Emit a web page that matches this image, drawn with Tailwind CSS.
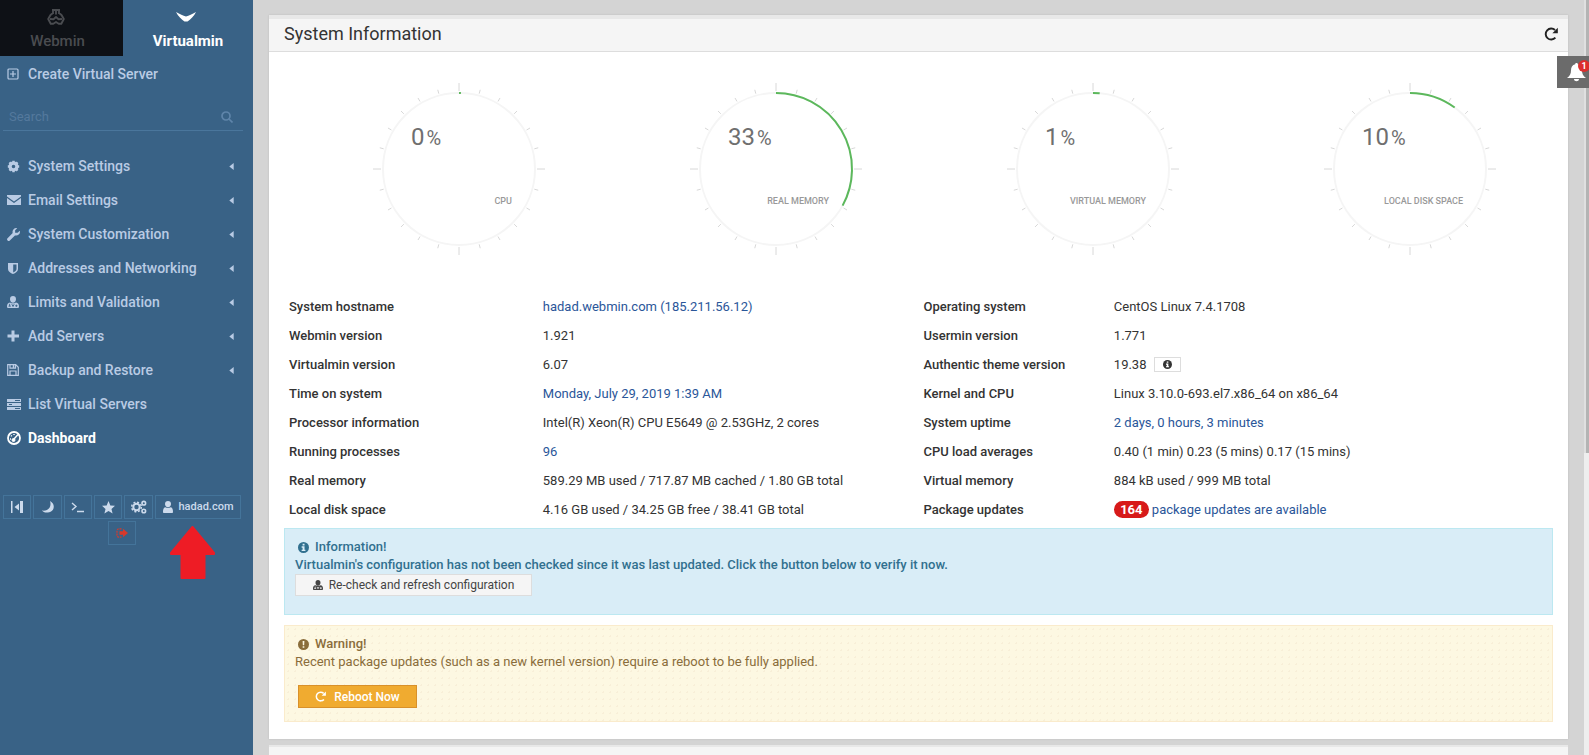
<!DOCTYPE html>
<html lang="en">
<head>
<meta charset="utf-8">
<title>Virtualmin - System Information</title>
<script src="https://cdn.jsdelivr.net/npm/@tailwindcss/browser@4"></script>
</head>
<body class="flex h-screen overflow-hidden bg-[#d4d4d4] font-[Roboto,sans-serif] text-[13px] leading-[18px] text-[#333]">

<!-- shared icon shapes -->
<svg class="hidden" aria-hidden="true">
  <symbol id="info" viewBox="0 0 16 16"><circle cx="8" cy="8" r="8" fill="currentColor"/><path fill="var(--dot)" d="M6.700 2.600h2.800v2.400H6.700zM5.300 6.300h4.200v4.800h1.300v2H5.300v-2h1.400V8.300H5.300z"/></symbol>
  <symbol id="userlock" viewBox="0 0 16 16"><path fill="currentColor" d="M8 0c2.600 0 4 1.700 4 4.200S10.300 9 8 9 4 6.700 4 4.200 5.400 0 8 0zM4 8.500c2.500 1.700 5.500 1.700 8 0 2.800.4 4 2.500 4 5 0 1.500-.5 2.500-1.500 2.500h-13C.5 16 0 15 0 13.500c0-2.500 1.200-4.600 4-5z"/><path d="M2 13.500h3M3.500 10.500v3M11 13h3m-1.500-1.500v3M6.500 11 8 14l1.500-3" stroke="var(--dot)" stroke-width="1.200" fill="none"/></symbol>
  <symbol id="reload" viewBox="0 0 16 16"><path d="M13 12.200A6.300 6.300 0 1 1 12.600 3.500" fill="none" stroke="currentColor" stroke-width="2.200"/><path fill="currentColor" d="M15.800.8v6.200H9.600z"/></symbol>
  <symbol id="caret" viewBox="0 0 5 8"><path fill="currentColor" d="M5 0v8L0 4z"/></symbol>
</svg>

<aside class="relative flex w-[253px] shrink-0 flex-col bg-[#396286] text-[14px] font-medium text-[#b9cbe4] [--dot:#396286]">
  <div class="flex h-14 shrink-0 text-center text-[15px]">
    <button class="flex w-[123px] flex-col items-center bg-[#0e1116] pt-2 pr-2 text-[#4a4c50]">
      <svg class="mr-1 h-[18px] w-[18px]" viewBox="0 0 18 18" fill="none" stroke="currentColor" stroke-width="1.900" stroke-linejoin="round"><path d="M5 2h8M6 2v4M9 2v4.500M12 2v4M6 5 3.500 7 1.200 11l2.500 4.800h2.600L9 14l2.700 1.800h2.600l2.500-4.800L14.500 7 12 5M3 11l3.500.3L9 9l2.500 2.300L15 11"/></svg>
      <span class="mt-1.5">Webmin</span>
    </button>
    <button class="flex flex-1 flex-col items-center pt-2 font-bold text-white">
      <svg class="mr-1 h-5 w-5" viewBox="0 0 20 20" fill="currentColor"><path d="M0 4c4 2.500 7 3.500 10 4.500C13 7.500 16 6.500 20 4c-2 4-5.500 7.500-8.500 9.500h-3C5.500 11.500 2 8 0 4z"/></svg>
      <span class="mt-1">Virtualmin</span>
    </button>
  </div>
  <a href="#" class="mt-1 flex h-7 items-center gap-2 pl-[7px]">
    <svg class="h-3 w-3" viewBox="0 0 12 12" fill="none" stroke="currentColor" stroke-width="1.200"><rect x="1" y="1" width="10" height="10" rx="1"/><path d="M6 3v6M3 6h6"/></svg>
    <span class="pl-[1px]">Create Virtual Server</span>
  </a>
  <label class="mt-4 ml-[3px] mr-2.5 flex h-[27px] items-center border-b border-[#4a769c] pl-1.5 pr-2.5 text-[#5f85aa]">
    <input type="text" placeholder="Search" aria-label="Search" class="w-full min-w-0 flex-1 bg-transparent text-[13px] font-normal outline-none placeholder:text-[#54799d]">
    <svg class="h-3 w-3" viewBox="0 0 12 12" fill="none" stroke="currentColor" stroke-width="1.700"><circle cx="5" cy="5" r="4"/><path d="m8 8 3.500 3.500"/></svg>
  </label>
  <nav class="mt-[18px] flex flex-col">
    <a href="#" class="flex h-[34px] items-center pl-[7px] pr-[19px]"><svg class="mr-2 h-[13px] w-[13px]" viewBox="0 0 16 16" fill="none" stroke="currentColor"><circle cx="8" cy="8" r="4.200" stroke-width="4"/><path stroke-width="3" d="M8 1v3M8 12v3M1 8h3M12 8h3M3 3l2 2M11 11l2 2M13 3l-2 2M5 11l-2 2"/></svg><span class="flex-1">System Settings</span><svg class="h-[7px] w-[5px]"><use href="#caret"/></svg></a>
    <a href="#" class="flex h-[34px] items-center pl-[7px] pr-[19px]"><svg class="mr-[7px] h-3 w-3.5" viewBox="0 0 14 12" fill="currentColor"><path d="M0 1h14v1.500L7 7.500 0 2.500zM0 4l7 5 7-5v7H0z"/></svg><span class="flex-1">Email Settings</span><svg class="h-[7px] w-[5px]"><use href="#caret"/></svg></a>
    <a href="#" class="flex h-[34px] items-center pl-[7px] pr-[19px]"><svg class="mr-2 h-[13px] w-[13px]" viewBox="0 0 16 16" fill="currentColor"><path d="M15.800 3.500a4.700 4.700 0 0 1-6 5.600L3.500 15.300a1.900 1.900 0 0 1-2.800-2.800L7 6.200A4.700 4.700 0 0 1 12.600.3L10 2.900v2.900h3z"/></svg><span class="flex-1">System Customization</span><svg class="h-[7px] w-[5px]"><use href="#caret"/></svg></a>
    <a href="#" class="flex h-[34px] items-center pl-2 pr-[19px]"><svg class="mr-2.5 h-[11px] w-2.5" viewBox="0 0 10 11" fill="currentColor"><path fill-rule="evenodd" d="M0 0h10v6c0 2.500-2.500 4-5 5-2.500-1-5-2.500-5-5zm5.200 1.500v8C7 8.500 8.500 7.500 8.500 6V1.500z"/></svg><span class="flex-1">Addresses and Networking</span><svg class="h-[7px] w-[5px]"><use href="#caret"/></svg></a>
    <a href="#" class="flex h-[34px] items-center pl-[7px] pr-[19px]"><svg class="mr-[9px] h-3 w-3"><use href="#userlock"/></svg><span class="flex-1">Limits and Validation</span><svg class="h-[7px] w-[5px]"><use href="#caret"/></svg></a>
    <a href="#" class="flex h-[34px] items-center pl-[7px] pr-[19px]"><svg class="mr-[9px] h-3 w-3" viewBox="0 0 12 12" fill="currentColor"><path d="M4.500.5h3v4H12v3H7.500v4h-3v-4H.5v-3h4z"/></svg><span class="flex-1">Add Servers</span><svg class="h-[7px] w-[5px]"><use href="#caret"/></svg></a>
    <a href="#" class="flex h-[34px] items-center pl-[7px] pr-[19px]"><svg class="mr-[9px] h-3 w-3" viewBox="0 0 12 12" fill="none" stroke="currentColor" stroke-width="1.200"><path d="M.7.7h8l2.600 2.600v8H.7zM3 .7v3.500h5.500V.7M3 11V7h6v4"/><path d="M6.500 1v3" stroke-width="1.500"/></svg><span class="flex-1">Backup and Restore</span><svg class="h-[7px] w-[5px]"><use href="#caret"/></svg></a>
    <a href="#" class="flex h-[34px] items-center pl-[7px]"><svg class="mr-[7px] h-3 w-3.5" viewBox="0 0 14 12" fill="currentColor"><path d="M0 1h14v3H0zM0 5h14v3H0zM0 9h14v3H0z"/><path stroke="var(--dot)" d="M8 2.500h5M2 6.500h3M8 10.500h5"/></svg><span>List Virtual Servers</span></a>
    <a href="#" class="flex h-[34px] items-center pl-[7px] font-bold text-white"><svg class="mr-[7px] h-3.5 w-3.5" viewBox="0 0 14 14" fill="none" stroke="currentColor"><circle cx="7" cy="7" r="6" stroke-width="1.800"/><path d="M7 8l4-4.500M3 8h1M4 4.500l.8.8M7 3v1" stroke-width="1.400"/><circle cx="6.500" cy="9" r="1.500" fill="currentColor"/></svg><span>Dashboard</span></a>
  </nav>
  <div class="mt-10 ml-[3px] mr-3 flex flex-wrap justify-center gap-0.5 text-[11px] font-normal text-[#ccdaec]">
    <button aria-label="Collapse" class="flex h-6 w-7 items-center justify-center border border-[#44749a]"><svg class="h-3 w-3" viewBox="0 0 12 12" fill="currentColor"><path d="M0 0h1.500v12H0zM9 0h3v12H9zM8 2.500v7L3.500 6z"/></svg></button>
    <button aria-label="Night mode" class="flex h-6 w-[29px] items-center justify-center border border-[#44749a]"><svg class="h-3 w-3" viewBox="0 0 12 12" fill="currentColor"><path d="M8 0c6 3 4.500 11-2 11.500C3 11.800 1 11 0 9.500 6 10.500 10 6 8 0z"/></svg></button>
    <button aria-label="Terminal" class="flex h-6 w-7 items-center justify-center border border-[#44749a]"><svg class="h-3 w-3.5" viewBox="0 0 14 12" fill="none" stroke="currentColor" stroke-width="1.400"><path d="m1 2 4 3.500L1 9M6 10.500h7"/></svg></button>
    <button aria-label="Favorites" class="flex h-6 w-7 items-center justify-center border border-[#44749a]"><svg class="h-[13px] w-[13px]" viewBox="0 0 14 14" fill="currentColor"><path d="m7 0 2 4.800 5 .4-3.800 3.300 1.200 5L7 10.800l-4.400 2.700 1.200-5L0 5.200l5-.4z"/></svg></button>
    <button aria-label="Settings" class="flex h-6 w-[29px] items-center justify-center border border-[#44749a]"><svg class="h-3.5 w-4" viewBox="0 0 16 14" fill="none" stroke="currentColor"><circle cx="5.500" cy="7" r="3.200" stroke-width="2"/><circle cx="5.500" cy="7" r="4.800" stroke-width="1.500" stroke-dasharray="2 1.770"/><circle cx="12.800" cy="3.200" r="1.800" stroke-width="1.600"/><circle cx="12.800" cy="11" r="1.800" stroke-width="1.600"/></svg></button>
    <button class="flex h-6 w-[86px] items-center justify-center gap-1.5 border border-[#44749a] font-medium"><svg class="h-3 w-2.5" viewBox="0 0 10 12" fill="currentColor"><path d="M5 0c2 0 3 1.300 3 3S6.800 6.300 5 6.300 2 4.700 2 3s1-3 3-3zM2.300 6.300c1.700 1 3.700 1 5.400 0C9.500 6.800 10 8.500 10 11c0 .7-.5 1-1 1H1c-.5 0-1-.3-1-1 0-2.500.5-4.200 2.300-4.700z"/></svg>hadad.com</button>
    <button aria-label="Log out" class="flex h-6 w-7 items-center justify-center border border-[#44749a] text-[#d8392b]"><svg class="h-2.5 w-3" viewBox="0 0 12 10"><path d="M5.500.8H3Q1 .8 1 3v4q0 2.200 2 2.200h2.500" fill="none" stroke="currentColor" stroke-width="1.200" stroke-dasharray="2 .8"/><path fill="currentColor" d="M3.500 3.300H7V.8L12 5 7 9.200V6.700H3.500z"/></svg></button>
  </div>
  <svg class="absolute top-[526px] left-[170px] h-[53px] w-[45px]" viewBox="0 0 45 53" aria-hidden="true"><path fill="#ee1c25" stroke="#ee1c25" stroke-width="2" stroke-linejoin="round" d="M22.500 1 44 27v1H34.500v24h-23V28H1v-1z"/></svg>
</aside>

<main class="flex min-w-0 flex-1 flex-col overflow-hidden pt-[15px] pl-4 pr-4">
  <section class="shrink-0 bg-white shadow-[0_0_2px_#bbb]">
    <header class="flex h-[37px] items-center justify-between border-t-4 border-b border-t-[#e8e8e8] border-b-[#ddd] bg-[#f5f5f5] pl-[15px] pr-2.5 pb-0.5">
      <h1 class="text-[18px] font-normal">System Information</h1>
      <button aria-label="Refresh" class="text-[#222]"><svg class="h-3.5 w-3.5"><use href="#reload"/></svg></button>
    </header>
    <div class="px-[15px] pt-[31px] pb-[17px]">
      <div id="gauges" class="grid grid-cols-4"></div>

      <table class="mt-[37px] w-full table-fixed text-left">
        <colgroup><col class="w-[20%]"><col class="w-[30%]"><col class="w-[15%]"><col class="w-[35%]"></colgroup>
        <tbody class="[&_td]:pl-[5px] [&_th]:pl-[5px] [&_th]:font-medium [&_tr]:h-[29px] [&_a]:text-[#2a5699]">
          <tr><th>System hostname</th><td><a href="#">hadad.webmin.com (185.211.56.12)</a></td><th>Operating system</th><td>CentOS Linux 7.4.1708</td></tr>
          <tr><th>Webmin version</th><td>1.921</td><th>Usermin version</th><td>1.771</td></tr>
          <tr><th>Virtualmin version</th><td>6.07</td><th>Authentic theme version</th><td><div class="flex items-center gap-2">19.38 <button aria-label="Theme information" class="flex h-[15px] w-[27px] items-center justify-center border border-[#ddd] [--dot:#fff]"><svg class="h-[9px] w-[9px]"><use href="#info"/></svg></button></div></td></tr>
          <tr><th>Time on system</th><td><a href="#">Monday, July 29, 2019 1:39 AM</a></td><th>Kernel and CPU</th><td>Linux 3.10.0-693.el7.x86_64 on x86_64</td></tr>
          <tr><th>Processor information</th><td>Intel(R) Xeon(R) CPU E5649 @ 2.53GHz, 2 cores</td><th>System uptime</th><td><a href="#">2 days, 0 hours, 3 minutes</a></td></tr>
          <tr><th>Running processes</th><td><a href="#">96</a></td><th>CPU load averages</th><td>0.40 (1 min) 0.23 (5 mins) 0.17 (15 mins)</td></tr>
          <tr><th>Real memory</th><td>589.29 MB used / 717.87 MB cached / 1.80 GB total</td><th>Virtual memory</th><td>884 kB used / 999 MB total</td></tr>
          <tr><th>Local disk space</th><td>4.16 GB used / 34.25 GB free / 38.41 GB total</td><th>Package updates</th><td><a href="#" class="flex items-center gap-[3px]"><span class="flex h-[17px] w-[35px] items-center justify-center rounded-full bg-[#d71a1a] font-bold text-white">164</span>package updates are available</a></td></tr>
        </tbody>
      </table>

      <div class="mt-1 h-[87px] border border-[#bce8f1] bg-[#d9edf7] px-2.5 pt-[9px] text-[#31708f] [--dot:#d9edf7]">
        <div class="flex items-center gap-1.5 pl-[3px] font-medium"><svg class="h-[11px] w-[11px]"><use href="#info"/></svg>Information!</div>
        <p class="font-medium">Virtualmin's configuration has not been checked since it was last updated. Click the button below to verify it now.</p>
        <button class="flex h-[22px] w-[237px] items-center justify-center gap-1.5 border border-[#ddd] bg-[#f5f5f5] text-[12px] text-[#444] [--dot:#f5f5f5]"><svg class="h-2.5 w-2.5"><use href="#userlock"/></svg>Re-check and refresh configuration</button>
      </div>
      <div class="mt-2.5 h-[97px] border border-[#faebcc] bg-[#fdf8e2] bg-[radial-gradient(#f8efd8_1px,transparent_1px)] bg-size-[7px_7px] px-2.5 pt-[9px] text-[#8a6d3b]">
        <div class="flex items-center gap-1.5 pl-[3px] font-medium"><svg class="h-[11px] w-[11px]" viewBox="0 0 16 16"><circle cx="8" cy="8" r="8" fill="currentColor"/><path fill="#fdf8e2" d="M6.700 3h2.600L9 9H7zM6.800 10.500h2.400v2.400H6.800z"/></svg>Warning!</div>
        <p>Recent package updates (such as a new kernel version) require a reboot to be fully applied.</p>
        <button class="mt-3.5 ml-[3px] flex h-[23px] w-[119px] items-center justify-center gap-2 border border-[#d9912a] bg-[#f0ab30] text-[12px] font-medium text-white"><svg class="h-[11px] w-[11px]"><use href="#reload"/></svg>Reboot Now</button>
      </div>
    </div>
  </section>
  <section class="mt-1.5 h-[37px] shrink-0 border-t-2 border-[#e8e8e8] bg-[#f5f5f5]"></section>
</main>

<div class="w-[5px] shrink-0 bg-[#eee]" aria-hidden="true"><div class="h-[60%] border-l-2 border-[#e0e0e0] bg-[#b4b4b4]"></div></div>

<button aria-label="Notifications" class="fixed top-14 right-0 h-8 w-8 overflow-hidden bg-[#6b6b6b] text-white">
  <svg class="ml-2.5 h-5 w-[19px]" viewBox="0 0 19 20" fill="currentColor"><path d="M9.500 1c.8 0 1.300.5 1.300 1.300 3 .8 4.200 3 4.200 6.200 0 3.500 1.200 5.500 4 7.500H0c2.800-2 4-4 4-7.500 0-3.200 1.200-5.400 4.200-6.200C8.200 1.500 8.700 1 9.500 1zM7 17h5c0 3-5 3-5 0z"/></svg>
  <span class="absolute top-1 left-[21px] flex h-3 w-3 items-center justify-center rounded-full bg-[#dc2f2f] text-[9px] leading-none font-bold">1</span>
</button>

<script>
  const gauges = [[0.4, '0', 'CPU'], [33, '33', 'REAL MEMORY'], [1.4, '1', 'VIRTUAL MEMORY'], [10, '10', 'LOCAL DISK SPACE']];
  const point = (r, deg) => {
    const a = deg * Math.PI / 180;
    return (86 + r * Math.sin(a)).toFixed(2) + ' ' + (86 - r * Math.cos(a)).toFixed(2);
  };
  let ticks = '';
  for (let i = 0; i < 24; i++) ticks += `M${point(78, i * 15)}L${point(i % 6 ? 82 : 86, i * 15)}`;
  document.getElementById('gauges').innerHTML = gauges.map(([v, n, label]) => `
    <div class="flex justify-center pl-8">
      <svg class="h-[172px] w-[172px]" viewBox="0 0 172 172" role="img" aria-label="${label} ${n}%">
        <circle cx="86" cy="86" r="76" fill="none" stroke="#f5f5f5" stroke-width="2"/>
        <path d="${ticks}" stroke="#d8d8d8"/>
        <path d="M${point(76, 0)}A76 76 0 0 1 ${point(76, v * 3.6)}" fill="none" stroke="#5cb85c" stroke-width="2"/>
        <text x="38" y="62" fill="#6f6f6f" class="text-[24px]">${n}<tspan dx="2" class="text-[20px]">%</tspan></text>
        <text x="139" y="121" text-anchor="end" fill="#999" class="text-[9px] font-medium">${label}</text>
      </svg>
    </div>`).join('');
</script>
</body>
</html>
